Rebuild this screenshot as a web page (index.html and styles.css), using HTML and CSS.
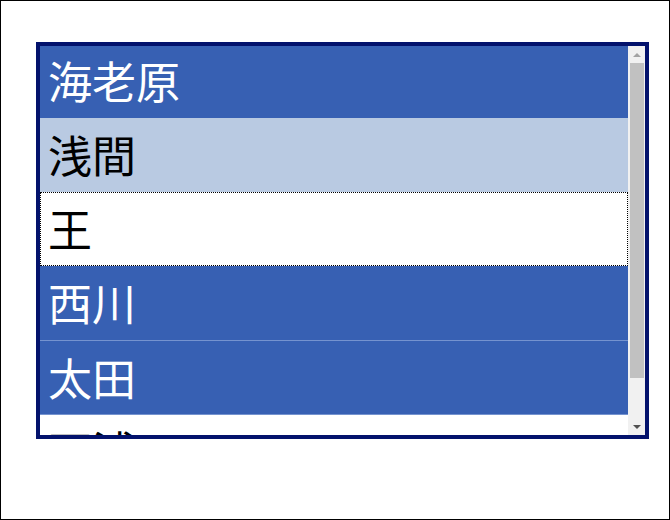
FILE: index.html
```html
<!DOCTYPE html>
<html lang="ja">
<head>
<meta charset="utf-8">
<title>List</title>
<link rel="stylesheet" href="styles.css">
</head>
<body>
<div class="frame">
  <div class="listbox">
    <div class="list">
      <div class="rows">
        <div class="opt sel">海老原</div>
        <div class="opt hover">浅間</div>
        <div class="opt focus">王</div>
        <div class="opt sel">西川</div>
        <div class="opt sel sep">太田</div>
        <div class="opt sep last">石浦</div>
      </div>
    </div>
    <div class="scrollbar">
      <div class="arrow up"></div>
      <div class="track"><div class="thumb"></div></div>
      <div class="arrow down"></div>
    </div>
  </div>
</div>
</body>
</html>
```
FILE: styles.css
```css
html, body {
  margin: 0;
  padding: 0;
  background: #fff;
}
.frame {
  box-sizing: border-box;
  width: 670px;
  height: 520px;
  border: 1px solid #000;
  padding: 41px 0 0 35px;
}
.listbox {
  box-sizing: border-box;
  width: 613px;
  height: 397px;
  border: 4px solid #03126c;
  display: flex;
  background: #fff;
}
.list {
  flex: 1;
  overflow: hidden;
}
.rows {
  margin-top: -2px;
}
.opt {
  box-sizing: border-box;
  height: 74px;
  line-height: 73px;
  padding-left: 8px;
  font-family: "Noto Sans CJK JP", "Noto Sans CJK SC", sans-serif;
  font-size: 44px;
  color: #000;
  background: #fff;
}
.opt.sel {
  background: #3760b3;
  color: #fff;
}
.opt.hover {
  background: #b9cae2;
}
.opt.focus {
  border: 1px dotted #000;
  line-height: 71px;
  padding-left: 7px;
}
.opt.sep {
  border-top: 1px solid #7593cf;
  line-height: 72px;
}
.opt.last {
  line-height: 71px;
}
.scrollbar {
  width: 17px;
  display: flex;
  flex-direction: column;
  background: #f1f1f1;
}
.arrow {
  height: 17px;
  display: flex;
  align-items: center;
  justify-content: center;
}
.arrow.up::before {
  content: "";
  border-left: 4px solid transparent;
  border-right: 4px solid transparent;
  border-bottom: 4px solid #a3a3a3;
}
.arrow.down::before {
  content: "";
  border-left: 4px solid transparent;
  border-right: 4px solid transparent;
  border-top: 4px solid #505050;
}
.track {
  flex: 1;
  padding: 0 1px 0 2px;
}
.thumb {
  height: 315px;
  background: #c1c1c1;
}
```
